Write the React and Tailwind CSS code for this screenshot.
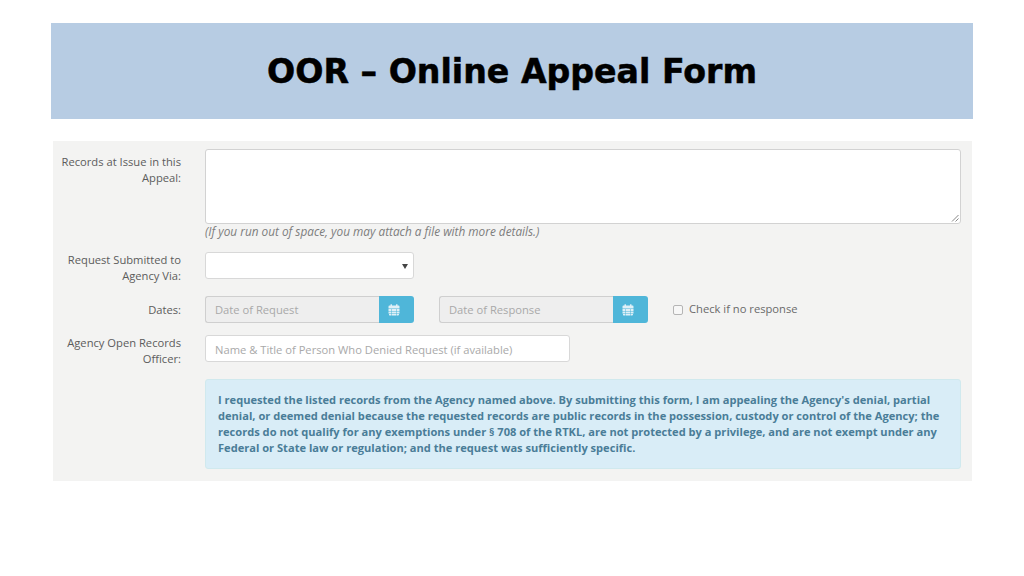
import React from "react";

const CalendarIcon = () => (
  <svg width="12" height="12" viewBox="0 0 12 12" fill="#dff0f7">
    <rect x="2.500" y="0.300" width="1.500" height="2" />
    <rect x="8" y="0.300" width="1.500" height="2" />
    <path d="M0.500 2.500a1 1 0 0 1 1-1h9a1 1 0 0 1 1 1v2h-11z" />
    <path d="M0.500 5h3v2h-3zM4 5h4v2H4zM8.500 5h3v2h-3zM0.500 7.500h3v2h-3zM4 7.500h4v2H4zM8.500 7.500h3v2h-3zM1 10h2.500v1.500H1.500a1 1 0 0 1-.5-.5zM4 10h4v1.500H4zM8.500 10H11v.5a1 1 0 0 1-1 1H8.500z" />
  </svg>
);

const DateInput = ({ placeholder, width }) => (
  <div className={`flex h-[27px] ${width}`}>
    <div className="flex-1 bg-[#eeeeee] border border-[#cfcfcf] border-r-0 rounded-l-[3px] pl-[9px] text-[11.200px] leading-[25px] text-[#a9a9a9]">
      {placeholder}
    </div>
    <div className="w-[35px] bg-[#4fb6d9] rounded-r-[3px] flex items-center justify-center pr-[5px]">
      <CalendarIcon />
    </div>
  </div>
);

const Label = ({ children, className = "" }) => (
  <div className={`w-[128px] text-right text-[11.200px] leading-[16px] text-[#5c5c5c] ${className}`}>
    {children}
  </div>
);

const App = () => {
  return (
    <div className="w-[1024px] h-[576px] bg-white overflow-hidden pt-[23px]" style={{ fontFamily: "'Open Sans', sans-serif" }}>
      {/* Title banner */}
      <div className="ml-[51px] w-[922px] h-[96px] bg-[#b7cce3] flex items-center justify-center">
        <h1 className="font-['DejaVu_Sans'] font-bold text-[33.200px] text-black leading-none pt-[1px] [-webkit-text-stroke:0.5px_black]">
          OOR – Online Appeal Form
        </h1>
      </div>

      {/* Form panel */}
      <div className="ml-[53px] mt-[22px] w-[919px] h-[340px] bg-[#f3f3f2] pt-[8px]">
        <div className="flex">
          <Label className="pt-[5px]">
            Records at Issue in this<br />Appeal:
          </Label>
          <div className="ml-[24px] w-[756px]">
            <div className="relative h-[75px] bg-white border border-[#d2d2d2] rounded-[3px]">
              <svg className="absolute right-[1px] bottom-[1px]" width="8" height="8" viewBox="0 0 8 8" stroke="#888" fill="none">
                <path d="M1 7.500L7.500 1M4.500 7.500L7.500 4.500" />
              </svg>
            </div>
            <p className="text-[11.800px] leading-[14px] pb-[2px] italic text-[#7d7d7d]">
              (If you run out of space, you may attach a file with more details.)
            </p>
          </div>
        </div>

        <div className="flex mt-[12px]">
          <Label>
            Request Submitted to<br />Agency Via:
          </Label>
          <div className="ml-[24px] relative w-[209px] h-[27px] bg-white border border-[#d8d8d8] rounded-[3px]">
            <span className="absolute right-[5px] top-[11px] w-0 h-0 border-x-[3px] border-x-transparent border-t-[5px] border-t-[#444]" />
          </div>
        </div>

        <div className="flex items-center mt-[12px] h-[27px]">
          <Label>Dates:</Label>
          <div className="ml-[24px] flex items-center">
            <DateInput placeholder="Date of Request" width="w-[209px]" />
            <div className="ml-[25px]">
              <DateInput placeholder="Date of Response" width="w-[209px]" />
            </div>
            <span className="ml-[25px] w-[10px] h-[10px] border border-[#b5b5b5] bg-[#f7f7f7] rounded-[2px]" />
            <span className="ml-[6px] text-[11.200px] text-[#6a6a6a]">Check if no response</span>
          </div>
        </div>

        <div className="flex mt-[12px]">
          <Label>
            Agency Open Records<br />Officer:
          </Label>
          <div className="ml-[24px] w-[365px] h-[27px] bg-white border border-[#d8d8d8] rounded-[3px] pl-[9px] text-[11.200px] leading-[27px] text-[#a9a9a9]">
            Name &amp; Title of Person Who Denied Request (if available)
          </div>
        </div>

        {/* Notice */}
        <div className="ml-[152px] mt-[12px] w-[756px] h-[90px] bg-[#d9edf7] border border-[#d0e9ee] rounded-[3px] pl-[12px] pt-[12px] text-[11.100px] leading-[16px] font-bold text-[#4a7d98]">
          I requested the listed records from the Agency named above. By submitting this form, I am appealing the Agency's denial, partial<br />
          denial, or deemed denial because the requested records are public records in the possession, custody or control of the Agency; the<br />
          records do not qualify for any exemptions under § 708 of the RTKL, are not protected by a privilege, and are not exempt under any<br />
          Federal or State law or regulation; and the request was sufficiently specific.
        </div>
      </div>
    </div>
  );
};

export default App;
